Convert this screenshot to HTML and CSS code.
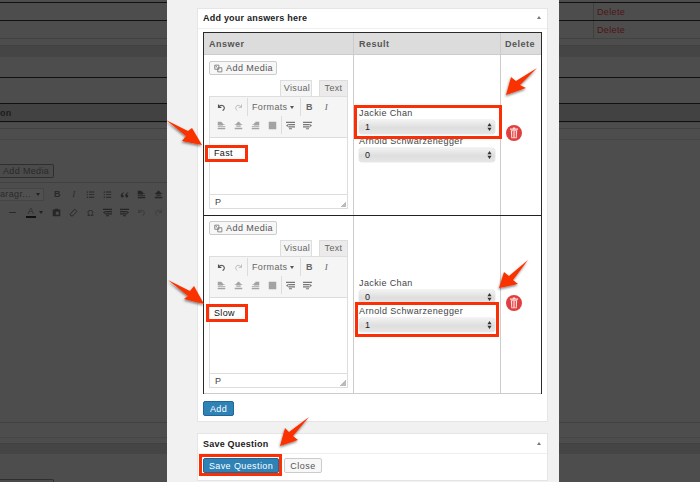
FILE: index.html
```html
<!DOCTYPE html>
<html lang="en">
<head>
<meta charset="utf-8">
<title>Add your answers here</title>
<link rel="stylesheet" href="styles.css">
</head>
<body>
<svg class="sprites" width="0" height="0" aria-hidden="true">
  <symbol id="i-undo" viewBox="0 0 12 12"><path d="M2 2v3.800h3.800M2.400 5.500C3.500 3.300 6 2.600 8 3.600c2 1 2.300 3.800.8 5.400L7.500 10.200" fill="none" stroke="currentColor" stroke-width="1.500"/></symbol>
  <symbol id="i-redo" viewBox="0 0 12 12"><path d="M10 2v3.800H6.200M9.600 5.500C8.500 3.300 6 2.600 4 3.600c-2 1-2.300 3.800-.8 5.400l1.300 1.200" fill="none" stroke="currentColor" stroke-width="1.300"/></symbol>
  <symbol id="i-left" viewBox="0 0 12 12"><path d="M1 1h5v1h1v1h1v1h2v1H8v1H1zM1 7h10v1H1zM1 9h10v2H1z" fill="currentColor"/></symbol>
  <symbol id="i-center" viewBox="0 0 12 12"><path d="M5 1h2v1h1v1h1v1h2v1H9v1H3V5H1V4h2V3h1V2h1zM3 7h6v1H3zM1 9h10v2H1z" fill="currentColor"/></symbol>
  <symbol id="i-right" viewBox="0 0 12 12"><path d="M6 1h5v5H4V5H2V4h2V3h1V2h1zM1 7h10v1H1zM1 9h10v2H1z" fill="currentColor"/></symbol>
  <symbol id="i-justify" viewBox="0 0 12 12"><path d="M1 1h10v10H1z" fill="currentColor"/></symbol>
  <symbol id="i-outdent" viewBox="0 0 12 12"><path d="M0 1h12v1.500H0zM3 4h9v1.500H3zM0 6l2.500-2v4zM3 7h9v1.500H3zM4 9.500h4V11H4z" fill="currentColor"/></symbol>
  <symbol id="i-indent" viewBox="0 0 12 12"><path d="M0 1h12v1.500H0zM0 4h9v1.500H0zM12 6L9.500 4v4zM0 7h9v1.500H0zM4 9.500h4V11H4z" fill="currentColor"/></symbol>
  <symbol id="i-media" viewBox="0 0 12 12"><path d="M1 1.500h5.500V7H1zM5 5h5.500v5.500H5z" fill="none" stroke="currentColor" stroke-width="1.100"/><circle cx="3" cy="3.500" r=".9" fill="currentColor"/></symbol>
  <symbol id="i-trash" viewBox="0 0 16 16"><circle cx="8" cy="8" r="8" fill="#e13f3f"/><path d="M4 3.500h8v1.200H4zM6.800 2.600h2.400v1H6.800zM4.800 5.200h6.400l-.5 8H5.300z" fill="#fbe3e3"/><path d="M6.500 6v6.500M8 6v6.500M9.500 6v6.500" stroke="#e13f3f" stroke-width=".8"/></symbol>
  <symbol id="i-list" viewBox="0 0 12 12"><path d="M1 2h1.500v1.500H1zM4 2h7v1.300H4zM1 5.500h1.500V7H1zM4 5.500h7v1.300H4zM1 9h1.500v1.500H1zM4 9h7v1.300H4z" fill="currentColor"/></symbol>
  <symbol id="i-quote" viewBox="0 0 12 12"><path d="M5 3C3 3.500 1 5 1 7.500 1 9 2 10 3 10s2-.8 2-2-1-1.800-1.800-1.800C3.500 5 4.200 4.500 5 4zM11 3C9 3.500 7 5 7 7.500 7 9 8 10 9 10s2-.8 2-2-1-1.800-1.800-1.800C9.500 5 10.200 4.500 11 4z" fill="currentColor"/></symbol>
  <symbol id="i-paste" viewBox="0 0 12 12"><path d="M1 2h3V1h4v1h3v9H1z" fill="currentColor"/><path d="M5 5h4v4H5z" fill="#4d4d4d"/></symbol>
  <symbol id="i-erase" viewBox="0 0 12 12"><path d="M7.500 1.500l3 3L5 10.500H2.500l-1-2z" fill="none" stroke="currentColor" stroke-width="1.200"/></symbol>
  <symbol id="i-updown" viewBox="0 0 6 10"><path d="M3 0l2.600 4H.4zM3 10L.4 6h5.200z" fill="currentColor"/></symbol>
</svg>

<div class="page">
  <div class="backdrop backdrop-left">
    <div class="bg-row bg-black bg-h2"></div>
    <div class="bg-row bg-black bg-h18"></div>
    <div class="bg-row bg-black bg-h18"></div>
    <div class="bg-row bg-line bg-h7"></div>
    <div class="bg-row bg-line bg-band bg-h11"></div>
    <div class="bg-row bg-faint bg-h21"></div>
    <div class="bg-row bg-black bg-h26"></div>
    <div class="bg-row bg-black bg-band bg-strong bg-h19"><span class="bg-heading">on</span></div>
    <div class="bg-row bg-faint bg-h6"></div>
    <div class="bg-row bg-line bg-h11"></div>
    <div class="bg-row bg-faint bg-h21"></div>
    <div class="bg-media-row">
      <div class="bg-media">Add Media</div>
    </div>
    <div class="bg-toolbar">
      <span class="bg-select">aragr... <i class="caret-dark"></i></span>
      <b class="bg-tool">B</b>
      <i class="bg-tool bg-serif">I</i>
      <svg class="bg-icon"><use href="#i-list"/></svg>
      <svg class="bg-icon"><use href="#i-list"/></svg>
      <svg class="bg-icon"><use href="#i-quote"/></svg>
      <svg class="bg-icon"><use href="#i-left"/></svg>
      <svg class="bg-icon"><use href="#i-center"/></svg>
    </div>
    <div class="bg-toolbar bg-toolbar-two">
      <span class="bg-dash"></span>
      <span class="bg-color">A</span>
      <i class="caret-dark"></i>
      <svg class="bg-icon"><use href="#i-paste"/></svg>
      <svg class="bg-icon"><use href="#i-erase"/></svg>
      <span class="bg-omega">Ω</span>
      <svg class="bg-icon"><use href="#i-outdent"/></svg>
      <svg class="bg-icon"><use href="#i-indent"/></svg>
      <svg class="bg-icon bg-dim"><use href="#i-undo"/></svg>
      <svg class="bg-icon bg-dim"><use href="#i-redo"/></svg>
    </div>
    <div class="bg-empty"></div>
    <div class="bg-row bg-line bg-h15"></div>
    <div class="bg-row bg-faint bg-h6"></div>
    <div class="bg-row bg-line bg-band bg-h11"></div>
    <div class="bg-h25"></div>
    <div class="bg-media bg-media-bottom"></div>
  </div>

  <main class="modal">
    <section class="panel panel-answers">
      <header class="panel-head">
        <h2>Add your answers here</h2>
        <i class="collapse"></i>
      </header>
      <div class="panel-body">
        <div class="answers">
          <div class="answers-head">
            <div>Answer</div>
            <div>Result</div>
            <div>Delete</div>
          </div>

          <div class="answer-row answer-row-first">
            <div class="cell-answer">
              <button class="media-btn"><svg class="media-icon"><use href="#i-media"/></svg>Add Media</button>
              <div class="tabs"><span class="tab tab-on">Visual</span><span class="tab">Text</span></div>
              <div class="editor">
                <div class="mce-bar">
                  <div class="mce-line">
                    <svg class="mce-icon"><use href="#i-undo"/></svg>
                    <svg class="mce-icon mce-off"><use href="#i-redo"/></svg>
                    <span class="mce-sep"></span>
                    <span class="mce-formats">Formats <i class="caret"></i></span>
                    <span class="mce-sep"></span>
                    <b class="mce-letter">B</b>
                    <i class="mce-letter mce-italic">I</i>
                  </div>
                  <div class="mce-line mce-line-two">
                    <svg class="mce-icon"><use href="#i-left"/></svg>
                    <svg class="mce-icon"><use href="#i-center"/></svg>
                    <svg class="mce-icon"><use href="#i-right"/></svg>
                    <svg class="mce-icon"><use href="#i-justify"/></svg>
                    <span class="mce-sep"></span>
                    <svg class="mce-icon mce-dent"><use href="#i-outdent"/></svg>
                    <svg class="mce-icon mce-dent"><use href="#i-indent"/></svg>
                  </div>
                </div>
                <div class="mce-content mce-content-first">Fast</div>
                <div class="mce-status">P<i class="grip"></i></div>
              </div>
            </div>
            <div class="cell-result">
              <label class="result-label">Jackie Chan</label>
              <div class="fake-select"><span>1</span><svg class="updown"><use href="#i-updown"/></svg></div>
              <label class="result-label">Arnold Schwarzenegger</label>
              <div class="fake-select"><span>0</span><svg class="updown"><use href="#i-updown"/></svg></div>
            </div>
            <div class="cell-delete"><svg class="trash"><use href="#i-trash"/></svg></div>
          </div>

          <div class="answer-row answer-row-second">
            <div class="cell-answer">
              <button class="media-btn"><svg class="media-icon"><use href="#i-media"/></svg>Add Media</button>
              <div class="tabs"><span class="tab tab-on">Visual</span><span class="tab">Text</span></div>
              <div class="editor">
                <div class="mce-bar">
                  <div class="mce-line">
                    <svg class="mce-icon"><use href="#i-undo"/></svg>
                    <svg class="mce-icon mce-off"><use href="#i-redo"/></svg>
                    <span class="mce-sep"></span>
                    <span class="mce-formats">Formats <i class="caret"></i></span>
                    <span class="mce-sep"></span>
                    <b class="mce-letter">B</b>
                    <i class="mce-letter mce-italic">I</i>
                  </div>
                  <div class="mce-line mce-line-two">
                    <svg class="mce-icon"><use href="#i-left"/></svg>
                    <svg class="mce-icon"><use href="#i-center"/></svg>
                    <svg class="mce-icon"><use href="#i-right"/></svg>
                    <svg class="mce-icon"><use href="#i-justify"/></svg>
                    <span class="mce-sep"></span>
                    <svg class="mce-icon mce-dent"><use href="#i-outdent"/></svg>
                    <svg class="mce-icon mce-dent"><use href="#i-indent"/></svg>
                  </div>
                </div>
                <div class="mce-content mce-content-second">Slow</div>
                <div class="mce-status">P<i class="grip"></i></div>
              </div>
            </div>
            <div class="cell-result">
              <label class="result-label">Jackie Chan</label>
              <div class="fake-select"><span>0</span><svg class="updown"><use href="#i-updown"/></svg></div>
              <label class="result-label">Arnold Schwarzenegger</label>
              <div class="fake-select"><span>1</span><svg class="updown"><use href="#i-updown"/></svg></div>
            </div>
            <div class="cell-delete"><svg class="trash"><use href="#i-trash"/></svg></div>
          </div>
        </div>
        <button class="btn-primary btn-add">Add</button>
      </div>
    </section>

    <section class="panel panel-save">
      <header class="panel-head panel-head-save">
        <h2>Save Question</h2>
        <i class="collapse"></i>
      </header>
      <div class="save-actions">
        <button class="btn-primary btn-save">Save Question</button>
        <button class="btn-close">Close</button>
      </div>
    </section>
  </main>

  <div class="backdrop backdrop-right">
    <div class="bg-row bg-black bg-h2"></div>
    <div class="bg-row bg-black bg-h18 bg-delete-row"><span class="bg-delete">Delete</span></div>
    <div class="bg-row bg-black bg-h18 bg-delete-row"><span class="bg-delete">Delete</span></div>
    <div class="bg-row bg-line bg-h7"></div>
    <div class="bg-row bg-line bg-band bg-h11"></div>
    <div class="bg-row bg-faint bg-h21"></div>
    <div class="bg-row bg-black bg-h26"></div>
    <div class="bg-row bg-black bg-band bg-strong bg-h19"></div>
    <div class="bg-row bg-faint bg-h6"></div>
    <div class="bg-row bg-line bg-h11"></div>
    <div class="bg-row bg-faint bg-h21"></div>
    <div class="bg-spacer-right"></div>
    <div class="bg-row bg-line bg-h15"></div>
    <div class="bg-row bg-faint bg-h6"></div>
    <div class="bg-row bg-line bg-band bg-h11"></div>
  </div>

  <svg class="markup" viewBox="0 0 700 482" width="700" height="482" aria-hidden="true">
    <defs>
      <filter id="arrow-shadow" x="-30%" y="-30%" width="160%" height="160%">
        <feDropShadow dx="-.5" dy="1.500" stdDeviation="1.200" flood-color="#000" flood-opacity=".5"/>
      </filter>
    </defs>
    <g fill="#fa3106" filter="url(#arrow-shadow)">
      <path d="M166 120 L188 131 L192 128 L202 145 L182 141 L186 136 Z"/>
      <path d="M168 280 L190 291 L194 286 L204 304 L184 299 L188 296 Z"/>
      <path d="M537 68 L520 85 L526 88 L506 95 L511 77 L516 81 Z"/>
      <path d="M528 260 L513 280 L518 284 L499 288 L504 272 L509 276 Z"/>
      <path d="M309 417 L293 436 L298 440 L280 446 L285 428 L289 432 Z"/>
    </g>
    <g fill="none" stroke="#fa2f06" stroke-width="3">
      <rect x="206.500" y="146.500" width="40" height="14"/>
      <rect x="355.500" y="106.500" width="145" height="31"/>
      <rect x="207.500" y="305.500" width="39" height="15"/>
      <rect x="356.500" y="303.500" width="141" height="32"/>
      <rect x="200.500" y="455.500" width="80" height="19"/>
    </g>
  </svg>
</div>
</body>
</html>
```
FILE: styles.css
```css
* { box-sizing: border-box; }
html, body { margin: 0; padding: 0; }
body {
  width: 700px;
  height: 482px;
  overflow: hidden;
  font-family: "Liberation Sans", Arial, sans-serif;
  font-size: 9px;
  letter-spacing: .35px;
  color: #444;
}
.sprites { position: absolute; }
.page {
  position: relative;
  display: flex;
  width: 700px;
  height: 482px;
  overflow: hidden;
}

/* dimmed page behind the dialog */
.backdrop {
  background: #4d4d4d;
  height: 482px;
  overflow: hidden;
  color: #262626;
}
.backdrop-left { width: 167px; flex: none; }
.backdrop-right { flex: 1; }
.bg-row { border-top: 1px solid transparent; display: flex; align-items: center; }
.bg-black { border-top-color: #111; }
.bg-line { border-top-color: #414141; }
.bg-faint { border-top-color: #464646; }
.bg-band { background: #454545; }
.bg-strong { background: #424242; border-bottom: 1px solid #111; }
.bg-h2 { height: 2px; border-top: 0; }
.bg-h6 { height: 6px; }
.bg-h7 { height: 7px; }
.bg-h11 { height: 11px; }
.bg-h15 { height: 15px; }
.bg-h18 { height: 18px; }
.bg-h19 { height: 19px; }
.bg-h21 { height: 21px; }
.bg-h25 { height: 25px; }
.bg-h26 { height: 26px; }
.bg-heading { font-weight: 700; color: #1c1c1c; }
.bg-media-row { height: 23px; padding-top: 4px; border-bottom: 1px solid #414141; }
.bg-media {
  width: 54px;
  height: 14px;
  padding-left: 3px;
  line-height: 12px;
  font-size: 9px;
  color: #2a2a2a;
  background: #4b4b4b;
  border: 1px solid #2f2f2f;
  border-left: 0;
  border-radius: 0 2px 2px 0;
}
.bg-media-bottom { height: 6px; }
.bg-toolbar {
  display: flex;
  align-items: center;
  height: 20px;
  padding-top: 2px;
  color: #2a2a2a;
}
.bg-toolbar-two { height: 17px; padding-left: 9px; }
.bg-select {
  display: flex;
  align-items: center;
  justify-content: space-between;
  width: 46px;
  height: 13px;
  padding-right: 3px;
  margin-right: 5px;
  background: #505050;
  border: 1px solid #444;
  border-left: 0;
}
.bg-tool { width: 17px; text-align: center; font-size: 9px; }
.bg-serif { font-family: "Liberation Serif", serif; }
.bg-icon { width: 9px; height: 9px; margin: 0 4px; flex: none; color: #262626; }
.bg-dim { color: #3d3d3d; }
.bg-dash { width: 7px; height: 1px; margin-right: 5px; background: #2a2a2a; }
.bg-color { width: 10px; margin: 0 2px 0 5px; text-align: center; border-bottom: 2px solid #111; line-height: 9px; }
.bg-omega { width: 17px; text-align: center; }
.caret-dark { width: 0; height: 0; border: 2.500px solid transparent; border-top: 3px solid #222; border-bottom: 0; margin: 0 5px 0 1px; }
.bg-select .caret-dark { margin: 0; }
.bg-empty { height: 202px; }
.bg-spacer-right { height: 262px; }
.bg-delete-row { justify-content: flex-start; padding-left: 34px; }
.bg-delete { padding-left: 3px; border-left: 1px solid #3f3f3f; height: 17px; line-height: 19px; color: #4f1414; font-size: 9px; }

/* dialog */
.modal {
  width: 392px;
  flex: none;
  height: 482px;
  background: #f1f1f1;
  padding: 8px 11px 0 30px;
  display: flex;
  flex-direction: column;
  gap: 11px;
}
.panel { background: #fff; border: 1px solid #e5e5e5; }
.panel-answers { height: 414px; }
.panel-save { height: 48px; }
.panel-head {
  display: flex;
  justify-content: space-between;
  align-items: center;
  height: 20px;
  padding: 0 6px 2px 5px;
  border-bottom: 1px solid #eee;
}
.panel-head-save { height: 20px; padding-bottom: 0; }
.panel-head h2 { margin: 0; font-size: 9px; font-weight: 700; color: #222; letter-spacing: .22px; }
.collapse { width: 0; height: 0; border: 2px solid transparent; border-bottom: 3px solid #777; border-top: 0; }
.panel-body { padding: 3px 6px 0 5px; }

.answers {
  border: 1px solid #2a2a2a;
  border-bottom: 0;
  height: 362px;
  width: 339px;
}
.answers-head, .answer-row {
  display: grid;
  grid-template-columns: 149px 147px 1fr;
}
.answers-head {
  height: 22px;
  background: #dcdcdc;
  border-bottom: 1px solid #ccc;
  font-weight: 700;
  color: #555;
  font-size: 9px;
  letter-spacing: .5px;
  line-height: 22px;
}
.answers-head > div { padding-left: 5px; }
.answers-head > div + div { border-left: 1px solid #ccc; }
.answers-head > div:last-child { padding-left: 4px; }
.answer-row-first { height: 161px; border-bottom: 1px solid #222; }
.answer-row-second { height: 178px; border-bottom: 1px solid #ccc; }
.cell-answer { padding: 6px 5px 0 5px; }
.answer-row-second .cell-answer { padding-top: 5px; }
.media-btn {
  display: flex;
  align-items: center;
  gap: 3px;
  width: 68px;
  height: 14px;
  padding: 0 0 0 4px;
  background: #f7f7f7;
  border: 1px solid #ccc;
  border-radius: 2px;
  font: inherit;
  letter-spacing: .45px;
  color: #555;
}
.media-icon { width: 9px; height: 9px; color: #777; flex: none; }
.tabs { display: flex; justify-content: flex-end; gap: 7px; height: 16px; margin-top: 5px; }
.tab {
  width: 29px;
  height: 16px;
  line-height: 14px;
  text-align: center;
  background: #ebebeb;
  border: 1px solid #ddd;
  border-bottom: 0;
  color: #666;
}
.tab-on { width: 32px; padding-left: 2px; background: #f5f5f5; }
.editor { border: 1px solid #ddd; }
.mce-bar { background: #f5f5f5; height: 41px; border-bottom: 1px solid #ddd; padding: 1px 0 0 3px; }
.mce-line { display: flex; align-items: center; height: 18px; color: #666; }
.mce-icon { width: 9px; height: 9px; margin: 0 4px; color: #555; flex: none; }
.mce-off { color: #bbb; }
.mce-line-two .mce-icon { color: #a3a3a3; }
.mce-line-two .mce-dent { color: #777; }
.mce-sep { width: 1px; height: 18px; background: #dcdcdc; }
.mce-formats { display: flex; align-items: center; gap: 3px; width: 52px; padding-left: 4px; color: #666; }
.caret { width: 0; height: 0; border: 2px solid transparent; border-top: 3px solid #555; border-bottom: 0; }
.mce-letter { width: 17px; text-align: center; color: #666; font-size: 9px; }
.mce-italic { font-family: "Liberation Serif", serif; }
.mce-content { padding: 10px 0 0 4px; color: #111; font-size: 9px; }
.mce-content-first { height: 56px; }
.mce-content-second { height: 75px; }
.mce-status { position: relative; height: 14px; padding-left: 5px; line-height: 14px; border-top: 1px solid #ddd; color: #444; }
.grip {
  position: absolute;
  right: 1px;
  bottom: 1px;
  width: 6px;
  height: 6px;
  background: linear-gradient(135deg, transparent 50%, #bbb 50%);
}
.cell-result {
  display: flex;
  flex-direction: column;
  justify-content: center;
  border-left: 1px solid #ccc;
  padding: 0 5px 2px;
}
.result-label { display: block; height: 14px; line-height: 14px; color: #444; letter-spacing: .38px; }
.fake-select {
  display: flex;
  align-items: center;
  justify-content: space-between;
  height: 14px;
  padding: 0 3px 0 6px;
  background: linear-gradient(#f2f2f2, #dedede 55%, #e6e6e6);
  border-radius: 4px;
  box-shadow: 0 0 1px #888;
  color: #222;
}
.updown { width: 5px; height: 8px; color: #333; }
.cell-delete {
  display: flex;
  align-items: center;
  border-left: 1px solid #ccc;
  padding-left: 5px;
}
.trash { width: 16px; height: 16px; margin-top: -4px; }
.btn-primary {
  background: #2e82b6;
  border: 1px solid #1f6795;
  border-radius: 2px;
  color: #fff;
  font: inherit;
  letter-spacing: .4px;
  padding: 0;
}
.btn-add { display: block; width: 31px; height: 15px; margin-top: 7px; }
.save-actions { display: flex; gap: 5px; padding: 4px 0 0 5px; }
.btn-save { width: 76px; height: 15px; }
.btn-close {
  width: 38px;
  height: 15px;
  background: #f7f7f7;
  border: 1px solid #ccc;
  border-radius: 2px;
  color: #555;
  font: inherit;
  letter-spacing: .5px;
  padding: 0;
}

/* annotation layer drawn on top of the screenshot */
.markup { position: absolute; left: 0; top: 0; pointer-events: none; }
```
